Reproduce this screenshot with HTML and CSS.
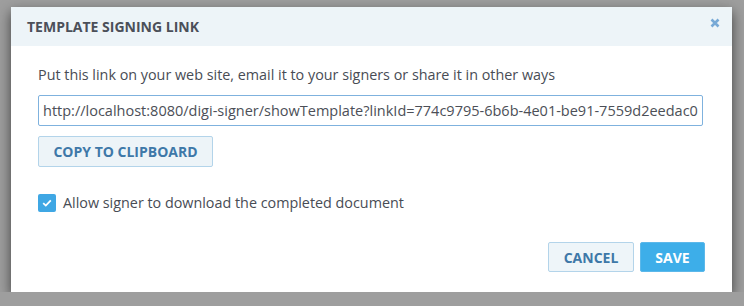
FILE: index.html
```html
<!DOCTYPE html>
<html lang="en">
  <head>
    <meta charset="UTF-8" />
    <meta name="viewport" content="width=device-width, initial-scale=1.0" />
    <title>Template Signing Link</title>
    <link rel="stylesheet" href="styles.css">
  </head>
  <body>
    <div class="dialog">
      <div class="dialog-header">
        <h4 class="dialog-title">TEMPLATE SIGNING LINK</h4>
        <button type="button" class="close" aria-label="Close">
          <svg width="10" height="10" viewBox="0 0 10 10">
            <path d="M1.5 1.5 L8.5 8.5 M8.5 1.5 L1.5 8.5" stroke="#77a9d6" stroke-width="2.6" stroke-linecap="butt" />
          </svg>
        </button>
      </div>
      <div class="dialog-body">
        <p class="hint">Put this link on your web site, email it to your signers or share it in other ways</p>
        <input
          type="text"
          class="link-input"
          value="http://localhost:8080/digi-signer/showTemplate?linkId=774c9795-6b6b-4e01-be91-7559d2eedac0"
          readonly
        />
        <button type="button" class="btn btn-light">COPY TO CLIPBOARD</button>
        <label class="check-row">
          <span class="checkbox">
            <svg width="10" height="8" viewBox="0 0 10 8">
              <path d="M1.2 4.2 L3.8 6.6 L8.8 1.4" fill="none" stroke="#fff" stroke-width="1.8" />
            </svg>
          </span>
          Allow signer to download the completed document
        </label>
      </div>
      <div class="dialog-footer">
        <button type="button" class="btn btn-light btn-cancel">CANCEL</button>
        <button type="button" class="btn btn-primary">SAVE</button>
      </div>
    </div>
  </body>
</html>
```

FILE: styles.css
```css
body {
  font-family: "Open Sans", "Liberation Sans", sans-serif;
  background-color: #9e9e9e;
  margin: 0;
  padding: 7px 0 0 11px;
}
.dialog {
  width: 721px;
  height: 285px;
  background: white;
  box-shadow: 0 5px 12px rgba(0, 0, 0, 0.6);
  display: flex;
  flex-direction: column;
  box-sizing: border-box;
}
.dialog-header {
  height: 39px;
  background-color: #edf4f8;
  display: flex;
  justify-content: space-between;
  align-items: center;
  padding: 0 12px 0 16px;
}
.dialog-title {
  margin: 0;
  font-size: 14px;
  font-weight: bold;
  color: #4b4f59;
  line-height: 39px;
}
.close {
  background: none;
  border: none;
  padding: 0;
  margin-top: -7px;
  cursor: pointer;
  display: flex;
}
.dialog-body {
  padding: 19px 29px 0 27px;
  flex: 1;
}
.hint {
  margin: 0 0 10px;
  font-size: 14.35px;
  line-height: 20px;
  color: #484c55;
}
.link-input {
  display: block;
  width: 100%;
  height: 31px;
  box-sizing: border-box;
  border: 1px solid #7fb2de;
  border-radius: 2px;
  padding: 0 4px;
  font-family: "Open Sans", "Liberation Sans", sans-serif;
  font-size: 14.5px;
  color: #4c4f57;
  outline: none;
}
.btn {
  font-family: "Open Sans", "Liberation Sans", sans-serif;
  font-size: 14px;
  font-weight: bold;
  border-radius: 2px;
  box-sizing: border-box;
  cursor: pointer;
  padding: 0;
}
.btn-light {
  margin-top: 10px;
  height: 31px;
  width: 175px;
  background-color: #edf4f8;
  border: 1px solid #b3d4ea;
  color: #3e78a8;
}
.check-row {
  display: flex;
  align-items: center;
  margin-top: 26px;
  font-size: 14.35px;
  color: #484c55;
  gap: 7px;
}
.checkbox {
  width: 18px;
  height: 18px;
  border-radius: 2px;
  background-color: #3fa7e4;
  display: flex;
  align-items: center;
  justify-content: center;
}
.dialog-footer {
  display: flex;
  justify-content: flex-end;
  gap: 6px;
  padding: 0 27px 20px 0;
}
.btn-cancel {
  margin-top: 0;
  width: 86px;
  height: 30px;
  background-color: #eef5f9;
}
.btn-primary {
  width: 65px;
  height: 30px;
  background-color: #3daee9;
  border: 1px solid #5cb8ea;
  color: white;
}
.btn-primary:hover {
  background-color: #2f9fd9;
}
```
